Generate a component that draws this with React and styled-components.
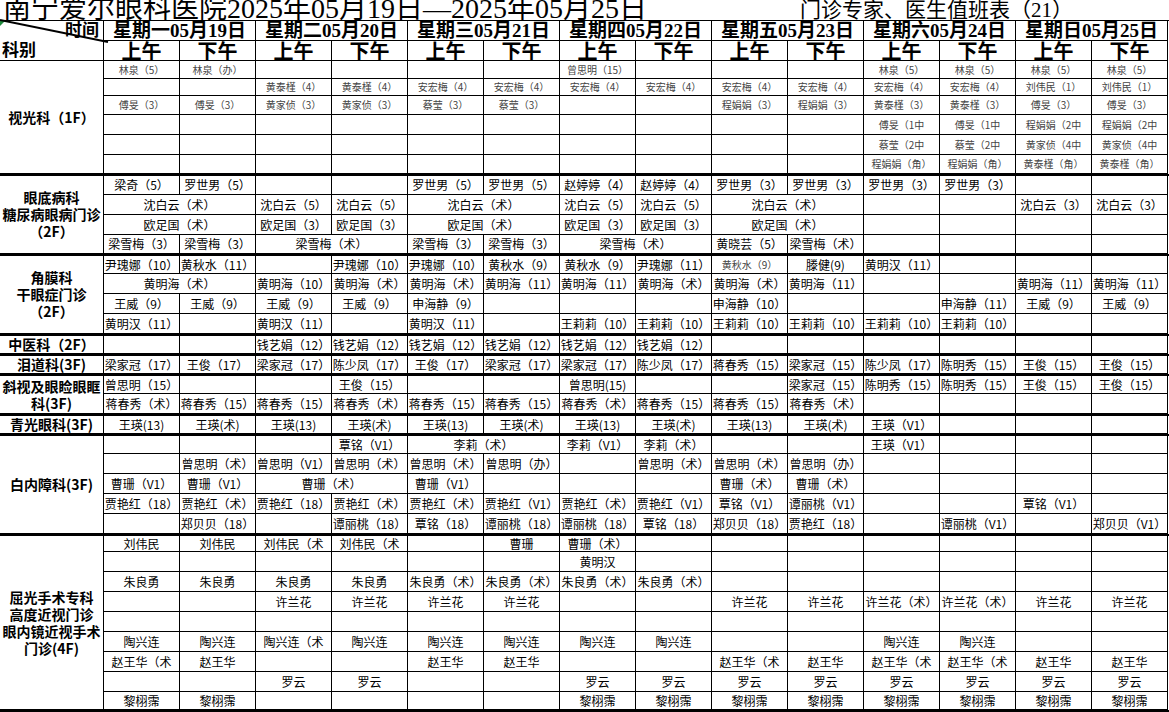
import React from 'react'
import styled, { createGlobalStyle } from 'styled-components'

const GlobalStyle = createGlobalStyle`
  html, body {
    margin: 0;
    padding: 0;
    background: #fff;
    overflow: hidden;
  }
  body {
    font-family: "Noto Sans CJK SC", sans-serif;
    color: #000;
  }
`

const SERIF = `"Liberation Serif", "Noto Sans CJK SC", serif`

// sheet frame
const Sheet = styled.div`
  width: 1169px;
  height: 712px;
  overflow: hidden;
`

const TitleBar = styled.div`
  display: grid;
  grid-template-columns: 800px 368px;
  height: 21px;
  border-bottom: 1px solid #000;
  box-sizing: border-box;
  overflow: hidden;
`

const TitleMain = styled.div`
  font-family: ${SERIF};
  font-size: 28px;
  line-height: 18px;
  padding-left: 3px;
  white-space: nowrap;
`

const TitleSub = styled.div`
  font-family: ${SERIF};
  font-size: 21px;
  line-height: 21px;
  white-space: nowrap;
`

// header: corner + days + half days
const HeadBlock = styled.div`
  display: grid;
  grid-template-columns: 104px 1064px;
  height: 40px;
`

const Corner = styled.div`
  position: relative;
  display: flex;
  flex-direction: column;
  justify-content: space-between;
  border-right: 1px solid #000;
  border-bottom: 1px solid #000;
  box-sizing: border-box;
  font-family: ${SERIF};
  font-weight: 700;
  font-size: 17px;
  line-height: 19px;
  &::before {
    content: '';
    position: absolute;
    left: 0;
    top: 0;
    border-top: 5px solid #1e8a3c;
    border-right: 5px solid transparent;
  }
`

const CornerTop = styled.span`
  align-self: flex-end;
  padding-right: 4px;
`

const CornerBottom = styled.span`
  align-self: flex-start;
  padding-left: 2px;
`

const Diagonal = styled.svg`
  position: absolute;
  left: 0;
  top: -1px;
  overflow: visible;
  z-index: 2;
`

const DayRow = styled.div`
  display: grid;
  grid-template-columns: repeat(7, 152px);
  height: 20px;
`

const DayCell = styled.div`
  border-right: 1px solid #000;
  border-bottom: 1px solid #000;
  box-sizing: border-box;
  font-family: ${SERIF};
  font-weight: 700;
  font-size: 19px;
  line-height: 19px;
  text-align: center;
  white-space: nowrap;
  overflow: hidden;
`

const HalfRow = styled.div`
  display: grid;
  grid-template-columns: repeat(14, 76px);
  height: 20px;
`

const HalfCell = styled.div`
  border-right: 1px solid #000;
  border-bottom: 1px solid #000;
  box-sizing: border-box;
  font-family: ${SERIF};
  font-weight: 700;
  font-size: 20px;
  line-height: 22px;
  text-align: center;
  overflow: hidden;
`

// body sections
const Section = styled.div`
  display: grid;
  grid-template-columns: 104px 1064px;
  border-top: ${({ $first }) => ($first ? 'none' : '2px solid #000')};
  border-bottom: ${({ $last }) => ($last ? '2px solid #000' : 'none')};
`

const Label = styled.div`
  display: flex;
  flex-direction: column;
  align-items: center;
  justify-content: center;
  border-right: 1px solid #000;
  border-bottom: 1px solid #000;
  box-sizing: border-box;
  font-weight: 700;
  font-size: 14px;
  line-height: 17px;
  white-space: nowrap;
`

const Rows = styled.div`
  display: flex;
  flex-direction: column;
`

const Row = styled.div`
  display: grid;
  grid-template-columns: repeat(14, 76px);
  height: ${({ $h }) => $h}px;
`

const Cell = styled.div`
  grid-column: span ${({ $span }) => $span};
  display: flex;
  align-items: center;
  justify-content: center;
  border-right: 1px solid #000;
  border-bottom: 1px solid #000;
  box-sizing: border-box;
  white-space: nowrap;
  overflow: hidden;
  font-size: ${({ $small }) => ($small ? '10px' : '12px')};
  color: ${({ $small }) => ($small ? '#444' : '#000')};
  line-height: 1;
`

const DAYS = [
  '星期一05月19日', '星期二05月20日', '星期三05月21日', '星期四05月22日',
  '星期五05月23日', '星期六05月24日', '星期日05月25日',
]

const e = (n) => Array(n).fill('')

// '<' merges with the cell to its left, '~' marks small grey text
const SECTIONS = [
  {
    label: ['视光科（1F）'],
    small: true,
    heights: [18, 17, 19, 20, 20, 19],
    rows: [
      ['林泉（5）', '林泉（办）', '', '', '', '', '曾思明（15）', '', '', '', '林泉（5）', '林泉（5）', '林泉（5）', '林泉（5）'],
      ['', '', '黄泰槿（4）', '黄泰槿（4）', '安宏梅（4）', '安宏梅（4）', '安宏梅（4）', '安宏梅（4）', '安宏梅（4）', '安宏梅（4）', '安宏梅（4）', '安宏梅（4）', '刘伟民（1）', '刘伟民（1）'],
      ['傅旻（3）', '傅旻（3）', '黄家侦（3）', '黄家侦（3）', '蔡莹（3）', '蔡莹（3）', '', '', '程娟娟（3）', '程娟娟（3）', '黄泰槿（3）', '黄泰槿（3）', '傅旻（3）', '傅旻（3）'],
      [...e(10), '傅旻（1中', '傅旻（1中', '程娟娟（2中', '程娟娟（2中'],
      [...e(10), '蔡莹（2中', '蔡莹（2中', '黄家侦（4中', '黄家侦（4中'],
      [...e(10), '程娟娟（角）', '程娟娟（角）', '黄泰槿（角）', '黄泰槿（角）'],
    ],
  },
  {
    label: ['眼底病科', '糖尿病眼病门诊', '（2F）'],
    heights: [19, 20, 20, 19],
    rows: [
      ['梁奇（5）', '罗世男（5）', '', '', '罗世男（5）', '罗世男（5）', '赵婷婷（4）', '赵婷婷（4）', '罗世男（3）', '罗世男（3）', '罗世男（3）', '罗世男（3）', '', ''],
      ['沈白云（术）', '<', '沈白云（5）', '沈白云（5）', '沈白云（术）', '<', '沈白云（5）', '沈白云（5）', '沈白云（术）', '<', '', '', '沈白云（3）', '沈白云（3）'],
      ['欧足国（术）', '<', '欧足国（3）', '欧足国（3）', '欧足国（术）', '<', '欧足国（3）', '欧足国（3）', '欧足国（术）', '<', '', '', '', ''],
      ['梁雪梅（3）', '梁雪梅（3）', '梁雪梅（术）', '<', '梁雪梅（3）', '梁雪梅（3）', '梁雪梅（术）', '<', '黄晓芸（5）', '梁雪梅（术）', '', '', '', ''],
    ],
  },
  {
    label: ['角膜科', '干眼症门诊', '（2F）'],
    heights: [18, 20, 20, 20],
    rows: [
      ['尹瑰娜（10）', '黄秋水（11）', '', '尹瑰娜（10）', '尹瑰娜（10）', '黄秋水（9）', '黄秋水（9）', '尹瑰娜（11）', '~黄秋水（9）', '滕健(9)', '黄明汉（11）', '', '', ''],
      ['黄明海（术）', '<', '黄明海（10）', '黄明海（术）', '黄明海（术）', '黄明海（11）', '黄明海（11）', '黄明海（术）', '黄明海（术）', '黄明海（11）', '', '', '黄明海（11）', '黄明海（11）'],
      ['王威（9）', '王威（9）', '王威（9）', '王威（9）', '申海静（9）', '', '', '', '申海静（10）', '', '', '申海静（11）', '王威（9）', '王威（9）'],
      ['黄明汉（11）', '', '黄明汉（11）', '', '黄明汉（11）', '', '王莉莉（10）', '王莉莉（10）', '王莉莉（10）', '王莉莉（10）', '王莉莉（10）', '王莉莉（10）', '', ''],
    ],
  },
  {
    label: ['中医科（2F）'],
    heights: [18],
    rows: [
      ['', '', '钱艺娟（12）', '钱艺娟（12）', '钱艺娟（12）', '钱艺娟（12）', '钱艺娟（12）', '钱艺娟（12）', ...e(6)],
    ],
  },
  {
    label: ['泪道科(3F)'],
    heights: [18],
    rows: [
      ['梁家冠（17）', '王俊（17）', '梁家冠（17）', '陈少凤（17）', '王俊（17）', '梁家冠（17）', '梁家冠（17）', '陈少凤（17）', '蒋春秀（15）', '梁家冠（15）', '陈少凤（17）', '陈明秀（15）', '王俊（15）', '王俊（15）'],
    ],
  },
  {
    label: ['斜视及眼睑眼眶', '科(3F)'],
    heights: [18, 20],
    rows: [
      ['曾思明（15）', '', '', '王俊（15）', '', '', '曾思明(15)', '', '', '梁家冠（15）', '陈明秀（15）', '陈明秀（15）', '王俊（15）', '王俊（15）'],
      ['蒋春秀（术）', '蒋春秀（15）', '蒋春秀（15）', '蒋春秀（术）', '蒋春秀（15）', '蒋春秀（15）', '蒋春秀（术）', '蒋春秀（15）', '蒋春秀（15）', '蒋春秀（术）', '', '', '', ''],
    ],
  },
  {
    label: ['青光眼科(3F)'],
    heights: [18],
    rows: [
      ['王瑛(13)', '王瑛(术)', '王瑛(13)', '王瑛(术)', '王瑛(13)', '王瑛(术)', '王瑛(13)', '王瑛(术)', '王瑛(13)', '王瑛(术)', '王瑛（V1）', '', '', ''],
    ],
  },
  {
    label: ['白内障科(3F)'],
    heights: [18, 20, 20, 20, 20],
    rows: [
      ['', '', '', '覃铭（V1）', '李莉（术）', '<', '李莉（V1）', '李莉（术）', '', '', '王瑛（V1）', '', '', ''],
      ['', '曾思明（术）', '曾思明（V1）', '曾思明（术）', '曾思明（术）', '曾思明（办）', '', '曾思明（术）', '曾思明（术）', '曾思明（办）', '', '', '', ''],
      ['曹珊（V1）', '曹珊（V1）', '曹珊（术）', '<', '曹珊（V1）', '', '', '', '曹珊（术）', '曹珊（术）', '', '', '', ''],
      ['贾艳红（18）', '贾艳红（术）', '贾艳红（18）', '贾艳红（术）', '贾艳红（术）', '贾艳红（V1）', '贾艳红（术）', '贾艳红（V1）', '覃铭（V1）', '谭丽桃（V1）', '', '', '覃铭（V1）', ''],
      ['', '郑贝贝（18）', '', '谭丽桃（18）', '覃铭（18）', '谭丽桃（18）', '谭丽桃（18）', '覃铭（18）', '郑贝贝（18）', '贾艳红（18）', '', '谭丽桃（V1）', '', '郑贝贝（V1）'],
    ],
  },
  {
    label: ['屈光手术专科', '高度近视门诊', '眼内镜近视手术', '门诊(4F)'],
    heights: [16, 20, 20, 20, 20, 20, 20, 20, 18],
    rows: [
      ['刘伟民', '刘伟民', '刘伟民（术', '刘伟民（术', '', '曹珊', '曹珊（术）', ...e(7)],
      [...e(6), '黄明汉', ...e(7)],
      ['朱良勇', '朱良勇', '朱良勇', '朱良勇', '朱良勇（术）', '朱良勇（术）', '朱良勇（术）', '朱良勇（术）', ...e(6)],
      ['', '', '许兰花', '许兰花', '许兰花', '许兰花', '', '', '许兰花', '许兰花', '许兰花（术）', '许兰花（术）', '许兰花', '许兰花'],
      e(14),
      ['陶兴连', '陶兴连', '陶兴连（术', '陶兴连', '陶兴连', '陶兴连', '陶兴连', '陶兴连', '', '', '陶兴连', '陶兴连', '', ''],
      ['赵王华（术', '赵王华', '', '', '赵王华', '赵王华', '', '', '赵王华（术', '赵王华', '赵王华（术', '赵王华（术', '赵王华', '赵王华'],
      ['', '', '罗云', '罗云', '', '', '罗云', '罗云', '罗云', '罗云', '罗云', '罗云', '罗云', '罗云'],
      ['黎栩霈', '黎栩霈', '', '', '', '', '黎栩霈', '黎栩霈', '黎栩霈', '黎栩霈', '黎栩霈', '黎栩霈', '黎栩霈', '黎栩霈'],
    ],
  },
]

// turn a row of half-day strings into cells with spans
const toCells = (row, small) => {
  const cells = []
  row.forEach((v) => {
    if (v === '<') {
      cells[cells.length - 1].span += 1
      return
    }
    const isSmall = small || v.startsWith('~')
    cells.push({ text: v.replace(/^~/, ''), span: 1, small: isSmall })
  })
  return cells
}

const ScheduleSection = ({ data, first, last }) => (
  <Section $first={first} $last={last}>
    <Label>
      {data.label.map((line) => (
        <span key={line}>{line}</span>
      ))}
    </Label>
    <Rows>
      {data.rows.map((row, i) => (
        <Row key={i} $h={data.heights[i]}>
          {toCells(row, data.small).map((c, j) => (
            <Cell key={j} $span={c.span} $small={c.small}>
              {c.text}
            </Cell>
          ))}
        </Row>
      ))}
    </Rows>
  </Section>
)

const App = () => (
  <Sheet>
    <GlobalStyle />
    <TitleBar>
      <TitleMain>南宁爱尔眼科医院2025年05月19日—2025年05月25日</TitleMain>
      <TitleSub>门诊专家、医生值班表（21）</TitleSub>
    </TitleBar>

    <HeadBlock>
      <Corner>
        <CornerTop>时间</CornerTop>
        <CornerBottom>科别</CornerBottom>
        <Diagonal width="110" height="24">
          <line x1="0" y1="0" x2="108" y2="22" stroke="#000" strokeWidth="2" />
        </Diagonal>
      </Corner>
      <div>
        <DayRow>
          {DAYS.map((d) => (
            <DayCell key={d}>{d}</DayCell>
          ))}
        </DayRow>
        <HalfRow>
          {DAYS.map((d) => (
            <React.Fragment key={d}>
              <HalfCell>上午</HalfCell>
              <HalfCell>下午</HalfCell>
            </React.Fragment>
          ))}
        </HalfRow>
      </div>
    </HeadBlock>

    {SECTIONS.map((s, i) => (
      <ScheduleSection
        key={s.label[0]}
        data={s}
        first={i === 0}
        last={i === SECTIONS.length - 1}
      />
    ))}
  </Sheet>
)

export default App
